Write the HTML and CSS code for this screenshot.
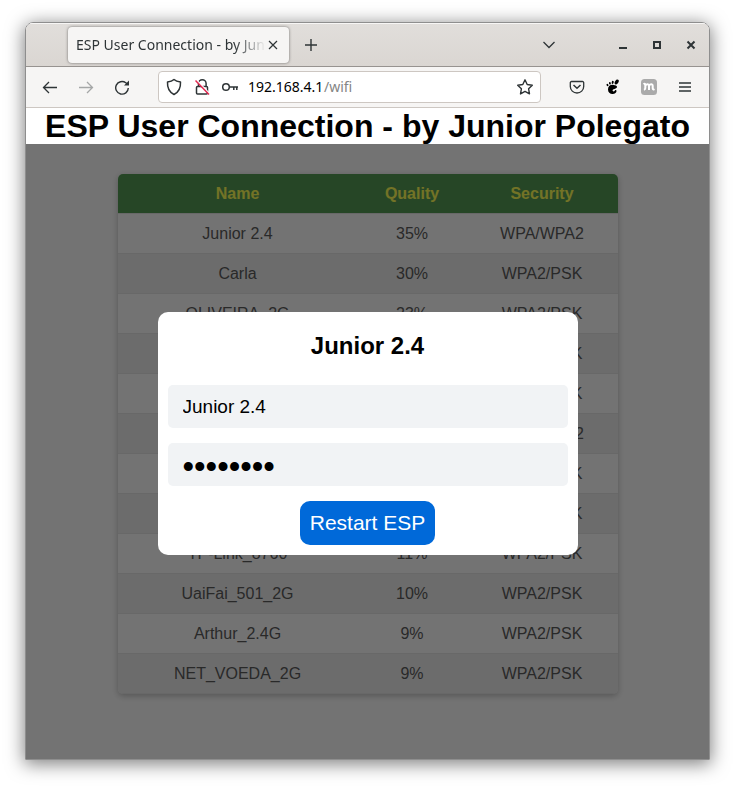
FILE: index.html
```html
<!DOCTYPE html>
<html lang="en">
<head>
<meta charset="utf-8">
<title>ESP User Connection - by Junior Polegato</title>
<link rel="stylesheet" href="styles.css">
</head>
<body>
<div class="window">
  <header class="titlebar">
    <div class="tab">
      <span class="tab-title">ESP User Connection - by Junior Polegato</span>
      <button class="icon-btn tab-close" aria-label="Close tab"><svg width="10" height="10" viewBox="0 0 10 10"><path d="M1 1l8 8M9 1l-8 8" stroke-width="1.2"/></svg></button>
    </div>
    <button class="icon-btn new-tab" aria-label="New tab"><svg width="14" height="14" viewBox="0 0 14 14"><path d="M7 1v12M1 7h12" stroke-width="1.4"/></svg></button>
    <div class="window-controls">
      <button class="icon-btn tabs-list" aria-label="List all tabs"><svg width="14" height="14" viewBox="0 0 14 14"><path d="M1.5 4L7 9.5 12.500 4" stroke-width="1.3"/></svg></button>
      <button class="icon-btn" aria-label="Minimize"><svg width="10" height="10" viewBox="0 0 10 10"><path d="M1 8h8" stroke-width="2"/></svg></button>
      <button class="icon-btn" aria-label="Maximize"><svg width="10" height="10" viewBox="0 0 10 10"><path d="M2 2h6v6H2z" stroke-width="2"/></svg></button>
      <button class="icon-btn" aria-label="Close"><svg width="10" height="10" viewBox="0 0 10 10"><path d="M1.500 1.500l7 7M8.500 1.500l-7 7" stroke-width="2"/></svg></button>
    </div>
  </header>

  <nav class="toolbar" aria-label="Browser">
    <div class="history">
      <button class="icon-btn" aria-label="Back"><svg width="16" height="16" viewBox="0 0 16 16"><path d="M15 8.500H1.500M7 3L1.500 8.500 7 14" stroke-width="1.3"/></svg></button>
      <button class="icon-btn" aria-label="Forward" disabled><svg width="16" height="16" viewBox="0 0 16 16"><path d="M1 8.500h13.500M9 3L14.500 8.500 9 14" stroke-width="1.3"/></svg></button>
      <button class="icon-btn" aria-label="Reload"><svg width="16" height="16" viewBox="0 0 16 16"><path d="M14.300 9A6.300 6.300 0 1 1 11.800 3.800L13 4.800" stroke-width="1.4"/><path class="solid" d="M15 1.500V6.500H10z"/></svg></button>
    </div>
    <div class="address">
      <div class="site-info">
        <button class="icon-btn" aria-label="Tracking protection"><svg width="16" height="18" viewBox="0 0 16 18"><path d="M8 1.500C6.500 3 4 3.800 1.500 4c-.3 5.500 1.500 10 6.500 12.500C13 14 14.800 9.500 14.500 4 12 3.800 9.500 3 8 1.500z" stroke-width="1.5" stroke-linejoin="round"/></svg></button>
        <button class="icon-btn" aria-label="Connection not secure"><svg width="16" height="18" viewBox="0 0 16 18"><path d="M4.500 8.500V5.500a3.800 3.700 0 0 1 7.600 0v3M3.500 8.500h9a1 1 0 0 1 1 1v5.500a1 1 0 0 1-1 1h-9a1 1 0 0 1-1-1V9.500a1 1 0 0 1 1-1z" stroke-width="1.5"/><path d="M2.500 2L16 16" stroke="#fff" stroke-width="1.500"/><path class="slash" d="M1.500 2.500L15 16.500" stroke-width="1.5"/></svg></button>
        <button class="icon-btn" aria-label="Saved password"><svg width="16" height="12" viewBox="0 0 16 12"><circle cx="4" cy="6" r="3.300" stroke-width="1.500"/><path d="M7.500 6H16M11.800 6v3M14.800 6v3" stroke-width="1.500"/></svg></button>
      </div>
      <label class="url"><input type="text" value="192.168.4.1" aria-label="Address"><span>/wifi</span></label>
      <button class="icon-btn" aria-label="Bookmark"><svg width="18" height="18" viewBox="0 0 18 18"><path d="M9 1.800l2.200 4.700 5.100.7-3.700 3.600.9 5.100L9 13.400l-4.500 2.500.9-5.100L1.700 7.200l5.100-.7z" stroke-width="1.400" stroke-linejoin="round"/></svg></button>
    </div>
    <div class="extensions">
      <button class="icon-btn" aria-label="Save to Pocket"><svg width="16" height="16" viewBox="0 0 16 16"><path d="M2.500 2.500h11a1.200 1.200 0 0 1 1.200 1.200V7.500a6.700 6.500 0 0 1-13.400 0V3.700a1.200 1.200 0 0 1 1.200-1.200z" stroke-width="1.300"/><path d="M4.500 6L8 9.300 11.500 6" stroke-width="1.500"/></svg></button>
      <button class="icon-btn" aria-label="GNOME Shell integration"><svg class="foot" width="14" height="16" viewBox="0 0 14 16"><path d="M7.500 5.900C4 5.500 2 7.500 2 10.500c0 2.800 2 4.500 4.500 4.500s4.200-1.500 4-3.200c-.1-.9-1.100-1-1.600-.3-.5.8-1.500 1.200-2.100.6-.8-.9.400-1.700 1.700-2.100 1.600-.5 2.600-1.300 2.500-2.300-.1-1.100-1.700-1.600-3.500-1.800z"/><ellipse cx="10.700" cy="3" rx="1.700" ry="2.600" transform="rotate(35 10.700 3)"/><ellipse cx="6.700" cy="3.300" rx="1" ry="1.600" transform="rotate(10 6.700 3.300)"/><ellipse cx="3.900" cy="4.300" rx=".9" ry="1.300" transform="rotate(-10 3.900 4.300)"/><ellipse cx="1.500" cy="6" rx=".9" ry="1.200" transform="rotate(-30 1.500 6)"/></svg></button>
      <button class="icon-btn" aria-label="Mendeley"><svg width="16" height="16" viewBox="0 0 16 16"><rect class="badge" width="16" height="16" rx="3.500"/><path class="badge-mark" d="M2.500 5.200c1.200-.8 1.900-.2 1.800 1V9c0 1-.4 1.500-1.400 1.700M4.400 6.300c1.300-1.600 3.600-1.500 3.600.3V11M8 6.300c1.300-1.600 3.800-1.500 3.700.3v2.600c0 1.300.8 1.600 1.800 1"/></svg></button>
      <button class="icon-btn" aria-label="Open menu"><svg width="14" height="14" viewBox="0 0 14 14"><path d="M1 3h12M1 7h12M1 11h12" stroke-width="1.300"/></svg></button>
    </div>
  </nav>

  <main class="page">
    <h1>ESP User Connection - by Junior Polegato</h1>
    <table class="networks">
      <colgroup><col class="col-name"><col class="col-quality"><col></colgroup>
      <thead><tr><th>Name</th><th>Quality</th><th>Security</th></tr></thead>
      <tbody>
        <tr><td>Junior 2.4</td><td>35%</td><td>WPA/WPA2</td></tr>
        <tr><td>Carla</td><td>30%</td><td>WPA2/PSK</td></tr>
        <tr><td>OLIVEIRA_2G</td><td>23%</td><td>WPA2/PSK</td></tr>
        <tr><td></td><td></td><td>WPA2/PSK</td></tr>
        <tr><td></td><td></td><td>WPA2/PSK</td></tr>
        <tr><td></td><td></td><td>WPA/WPA2</td></tr>
        <tr><td></td><td></td><td>WPA2/PSK</td></tr>
        <tr><td></td><td></td><td>WPA2/PSK</td></tr>
        <tr><td>TP-Link_8760</td><td>11%</td><td>WPA2/PSK</td></tr>
        <tr><td>UaiFai_501_2G</td><td>10%</td><td>WPA2/PSK</td></tr>
        <tr><td>Arthur_2.4G</td><td>9%</td><td>WPA2/PSK</td></tr>
        <tr><td>NET_VOEDA_2G</td><td>9%</td><td>WPA2/PSK</td></tr>
      </tbody>
    </table>
    <div class="overlay">
      <form class="modal" role="dialog" aria-labelledby="modal-title">
        <h2 id="modal-title">Junior 2.4</h2>
        <input class="field" type="text" value="Junior 2.4" aria-label="Network name">
        <input class="field password" type="password" value="polegato" aria-label="Password">
        <button class="restart" type="button">Restart ESP</button>
      </form>
    </div>
  </main>
</div>
</body>
</html>
```
FILE: styles.css
```css
* { box-sizing: border-box; }

body {
  margin: 0;
  min-height: 100vh;
  padding: 22px 25px 28px;
  display: flex;
  background: #fff;
  font-family: "Liberation Sans", Arial, sans-serif;
}

button, input { font: inherit; border: 0; }

svg { display: block; fill: none; stroke: #2e3436; }
svg .solid { fill: #2e3436; stroke: none; }
svg .slash { stroke: #e22850; }
svg .badge { fill: #aaa; stroke: none; }
svg .badge-mark { stroke: #fff; stroke-width: 2; }
svg.foot { fill: #000; stroke: none; }

.window {
  flex: 1;
  min-width: 0;
  display: flex;
  flex-direction: column;
  border: 1px solid #8e8e8e;
  border-radius: 8px 8px 0 0;
  box-shadow: 0 3px 18px 1px rgba(0, 0, 0, .5);
  overflow: hidden;
}

.icon-btn {
  display: flex;
  align-items: center;
  justify-content: center;
  padding: 0;
  background: none;
}
.icon-btn:disabled { opacity: .4; }

.titlebar {
  height: 44px;
  display: flex;
  align-items: center;
  padding: 0 13px 0 42px;
  background: linear-gradient(#e1dedb, #dad6d2);
  border-bottom: 1px solid #979390;
  box-shadow: inset 0 1px #f7f6f5;
}

.tab {
  width: 221px;
  height: 36px;
  display: flex;
  align-items: center;
  gap: 2px;
  padding: 0 11px 0 8px;
  background: #f6f5f4;
  border-radius: 4px;
  box-shadow: 0 0 3px rgba(0, 0, 0, .5);
}
.tab-title {
  flex: 1;
  overflow: hidden;
  white-space: nowrap;
  font: 14px/20px "Noto Sans", sans-serif;
  color: #2e3436;
  mask-image: linear-gradient(to left, transparent, #000 32px);
}
.new-tab { margin-left: 15px; }
.window-controls {
  margin-left: auto;
  display: flex;
  align-items: center;
  gap: 24px;
}
.tabs-list { margin-right: 38px; }

.toolbar {
  height: 41px;
  display: flex;
  align-items: center;
  gap: 28px;
  padding: 0 17px 0 16px;
  background: #f6f5f4;
  border-bottom: 1px solid #cdc7c2;
}
.history { display: flex; gap: 20px; }
.extensions { display: flex; align-items: center; gap: 21px; }
.address {
  flex: 1;
  height: 32px;
  display: flex;
  align-items: center;
  gap: 10px;
  padding: 0 6px 0 7px;
  background: #fff;
  border: 1px solid #cdc7c2;
  border-radius: 4px;
}
.site-info { display: flex; align-items: center; gap: 12px; }
.url {
  flex: 1;
  display: flex;
  font: 14px/20px "Noto Sans", sans-serif;
  color: #858585;
}
.url input {
  width: 76px;
  padding: 0;
  color: #000;
  background: none;
}

.page {
  position: relative;
  flex: 1;
  background: #fff;
}
h1 {
  position: relative;
  z-index: 2;
  margin: 0;
  background: #fff;
  color: #000;
  font-size: 32px;
  line-height: 36px;
  text-align: center;
}

.networks {
  width: calc(100% - 183px);
  margin: 30px auto;
  table-layout: fixed;
  border-spacing: 0;
  border-radius: 5px;
  overflow: hidden;
  box-shadow: 0 2px 6px rgba(0, 0, 0, .25);
  color: #5c5c5c;
  font-size: 16px;
  line-height: 19px;
  text-align: center;
}
.col-name { width: 240px; }
.col-quality { width: 109px; }
.networks th, .networks td {
  height: 40px;
  padding: 10px;
  border-bottom: 1px solid #e6e6e6;
}
.networks th { background: #569b56; color: #ffff56; }
.networks tbody tr:nth-child(even) { background: #efefef; }

.overlay {
  position: absolute;
  inset: 0;
  z-index: 1;
  display: flex;
  align-items: center;
  justify-content: center;
  background: rgba(0, 0, 0, .55);
}
.modal {
  width: 420px;
  display: flex;
  flex-direction: column;
  align-items: center;
  gap: 15px;
  padding: 10px;
  background: #fff;
  border-radius: 10px;
}
.modal h2 {
  margin: 10px 0;
  font-size: 24px;
  line-height: 28px;
}
.field {
  width: 100%;
  height: 43px;
  padding: 0 15px;
  border-radius: 5px;
  background: #f1f3f5;
  color: #000;
  font-size: 19px;
}
.password { padding-top: 4px; font-size: 33px; }
.restart {
  height: 44px;
  padding: 0 10px;
  border-radius: 10px;
  background: #0069d9;
  color: #fff;
  font-size: 21px;
}
```
